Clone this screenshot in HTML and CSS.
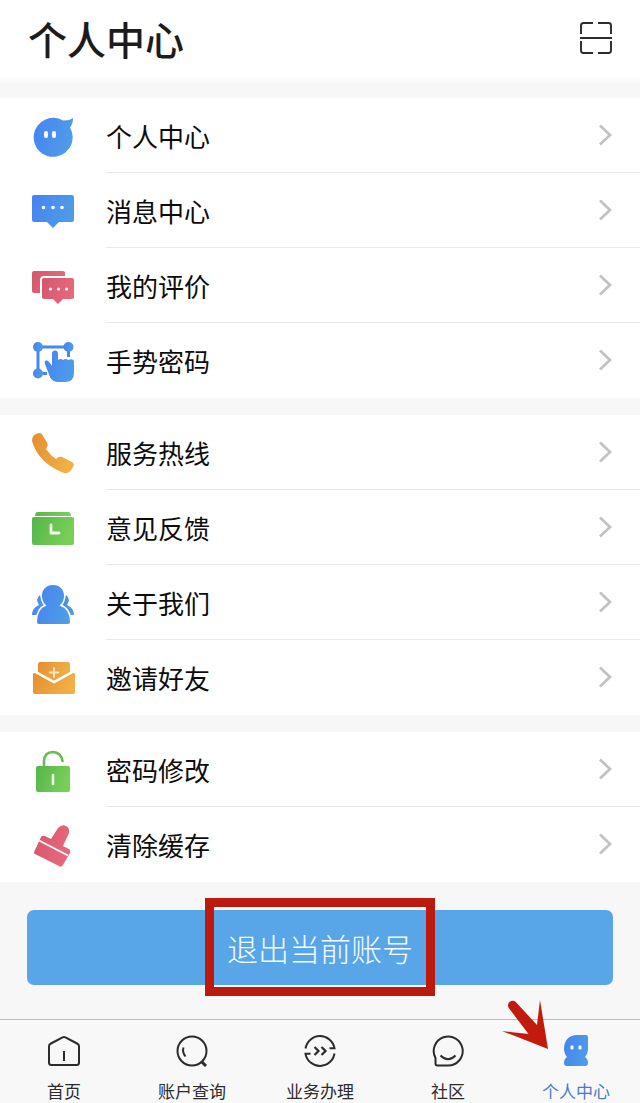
FILE: index.html
```html
<!DOCTYPE html>
<html lang="zh-CN">
	<head>
		<title>个人中心</title>
		<meta charset="UTF-8">
		<meta name="viewport" content="width=device-width, initial-scale=1">
		<link rel="stylesheet" href="styles.css">
	</head>
	<body>
		<!-- общие градиенты иконок -->
		<svg class="defs" width="0" height="0" aria-hidden="true">
			<defs>
				<linearGradient id="blue" x1="0" y1="0" x2="1" y2="0.3"><stop offset="0" stop-color="#4583f0"/><stop offset="1" stop-color="#4e9be8"/></linearGradient>
				<linearGradient id="red" x1="0" y1="0" x2="1" y2="0.3"><stop offset="0" stop-color="#d4566b"/><stop offset="1" stop-color="#e5697c"/></linearGradient>
				<linearGradient id="orange" x1="0" y1="0" x2="1" y2="0.3"><stop offset="0" stop-color="#e58e31"/><stop offset="1" stop-color="#f0b045"/></linearGradient>
				<linearGradient id="green" x1="0" y1="0" x2="1" y2="0.3"><stop offset="0" stop-color="#55b548"/><stop offset="1" stop-color="#78cf58"/></linearGradient>
				<symbol id="arrow" viewBox="0 0 14 24"><path d="M2 2.500L12 12L2 21.500" fill="none" stroke="#c2c2c2" stroke-width="2.800"/></symbol>
			</defs>
		</svg>
		<div class="page">
			<header class="header">
				<h1>个人中心</h1>
				<button class="scan" aria-label="扫一扫">
					<svg viewBox="0 0 32 32" width="32" height="32"><path d="M1 12V3.500Q1 1 3.500 1H13M18 1H28.500Q31 1 31 3.500V12M31 19V28.500Q31 31 28.500 31H18M13 31H3.500Q1 31 1 28.500V19M0 16H32" fill="none" stroke="#2b2b2b" stroke-width="1.900"/></svg>
				</button>
			</header>
			<main class="content">
				<div class="group">
					<a class="row" href="#profile">
						<svg class="icon" viewBox="0 0 44 44"><path d="M42 4Q42 10 39 13.500A19.500 19.500 0 1 1 32 6.500Q38 7 42 4Z" fill="url(#blue)"/><rect x="13" y="17" width="4" height="7" rx="2" fill="#fff"/><rect x="21" y="17" width="4" height="7" rx="2" fill="#fff"/></svg>
						<span class="name">个人中心<svg class="arrow"><use href="#arrow"/></svg></span>
					</a>
					<a class="row" href="#messages">
						<svg class="icon" viewBox="0 0 44 44"><path d="M3 6H41Q43 6 43 8V31Q43 33 41 33H28L22 39L16 33H3Q1 33 1 31V8Q1 6 3 6Z" fill="url(#blue)"/><g fill="#fff"><circle cx="12.500" cy="18.500" r="1.800"/><circle cx="22" cy="18.500" r="1.800"/><circle cx="31" cy="18.500" r="1.800"/></g></svg>
						<span class="name">消息中心<svg class="arrow"><use href="#arrow"/></svg></span>
					</a>
					<a class="row" href="#reviews">
						<svg class="icon" viewBox="0 0 44 44"><rect x="1" y="7" width="33" height="22" rx="2" fill="url(#red)"/><path d="M13 14H41Q43 14 43 16V33Q43 35 41 35H32L27 40L22 35H13Q11 35 11 33V16Q11 14 13 14Z" fill="url(#red)" stroke="#fff" stroke-width="4" paint-order="stroke"/><g fill="#fff"><circle cx="19.500" cy="25" r="1.600"/><circle cx="27.500" cy="25" r="1.600"/><circle cx="35.500" cy="25" r="1.600"/></g></svg>
						<span class="name">我的评价<svg class="arrow"><use href="#arrow"/></svg></span>
					</a>
					<a class="row" href="#gesture">
						<svg class="icon" viewBox="0 0 44 44"><path d="M16 34.500H7V8H37.500V18" fill="none" stroke="#4788ed" stroke-width="3"/><g fill="url(#blue)"><circle cx="7" cy="8" r="5"/><circle cx="37.500" cy="8" r="5"/><circle cx="7" cy="34.500" r="5"/><path d="M21 29V15Q21 11.500 24 11.500Q27 11.500 27 15V21Q30 19 32 21Q35 19 37 21Q43 19 43 23V34Q43 43 34 43H28Q21 43 19 38L14 25Q13 21 16 21.500Q18 22 21 27Z" stroke="#fff" stroke-width="2" paint-order="stroke"/></g></svg>
						<span class="name">手势密码<svg class="arrow"><use href="#arrow"/></svg></span>
					</a>
				</div>
				<div class="group">
					<a class="row" href="#hotline">
						<svg class="icon" viewBox="0 0 44 44"><path d="M1 10Q1 3 8 2Q11 2 12 5L16.500 12Q17.500 15 15 18Q19 24 25 28Q28 25 31 26L41 31Q44 33 42 36Q39 43 33 42Q22 38 13 30Q4 21 1 10Z" fill="url(#orange)"/></svg>
						<span class="name">服务热线<svg class="arrow"><use href="#arrow"/></svg></span>
					</a>
					<a class="row" href="#feedback">
						<svg class="icon" viewBox="0 0 44 44"><path d="M4 10Q4 6 7 6H37Q40 6 40 10Z" fill="url(#green)"/><rect x="1" y="11" width="42" height="28" rx="2" fill="url(#green)"/><path d="M20 19V27H28" fill="none" stroke="#f0fbe9" stroke-width="2.800" stroke-linecap="round" stroke-linejoin="round"/></svg>
						<span class="name">意见反馈<svg class="arrow"><use href="#arrow"/></svg></span>
					</a>
					<a class="row" href="#about">
						<svg class="icon" viewBox="0 0 44 44"><g fill="url(#blue)"><path d="M9 14Q4 18 8 24Q1 27 1 34H6L15 25Z"/><path d="M35 14Q40 18 36 24Q43 27 43 34H38L29 25Z"/><path d="M22 4C14 4 10.500 10 11 16C11.500 20 13 23 15.500 24.500Q6 28 6 41Q6 43 8 43H37Q39 43 39 41Q39 28 28.500 24.500C31 23 32.500 20 33 16C33.500 10 30 4 22 4Z" stroke="#fff" stroke-width="3" paint-order="stroke"/></g></svg>
						<span class="name">关于我们<svg class="arrow"><use href="#arrow"/></svg></span>
					</a>
					<a class="row" href="#invite">
						<svg class="icon" viewBox="0 0 44 44"><path d="M7 17V8Q7 6 9 6H37Q39 6 39 8V17L23 25Z" fill="url(#orange)"/><path d="M2 18Q2 17 4 17L23 27.500L42 17Q44 17 44 18V36Q44 38 42 38H4Q2 38 2 36Z" fill="url(#orange)"/><path d="M3 15L23 26L43 15" fill="none" stroke="#fff" stroke-width="2.400"/><path d="M18 16.500H28M23 11.500V21.500" stroke="#ffe6bd" stroke-width="2"/></svg>
						<span class="name">邀请好友<svg class="arrow"><use href="#arrow"/></svg></span>
					</a>
				</div>
				<div class="group">
					<a class="row" href="#password">
						<svg class="icon" viewBox="0 0 44 44"><path d="M13 18V13Q13.500 4 22 4Q30 4.500 31.500 13" fill="none" stroke="#63bf51" stroke-width="2.600" stroke-linecap="round"/><rect x="5" y="18" width="34" height="26" rx="2" fill="url(#green)"/><path d="M22 27V36" stroke="#f0fbe9" stroke-width="2.600" stroke-linecap="round"/></svg>
						<span class="name">密码修改<svg class="arrow"><use href="#arrow"/></svg></span>
					</a>
					<a class="row" href="#cache">
						<svg class="icon" viewBox="0 0 44 44"><path d="M20 16L27 5Q31 1 35 3Q39 5 38 10L32 23L38 26Q40 28 39 30L32 42Q30 45 28 43L4 31Q2 30 4 27L10 14Q11 12 14 13Z" fill="url(#red)"/><path d="M8 17.500L37 32.500" stroke="#fff" stroke-width="1.800"/></svg>
						<span class="name">清除缓存<svg class="arrow"><use href="#arrow"/></svg></span>
					</a>
				</div>
				<div class="logout">
					<button class="logout-btn">退出当前账号</button>
					<div class="mark"></div>
				</div>
			</main>
			<nav class="tabs">
				<a class="tab" href="#home">
					<svg viewBox="0 0 32 32"><path d="M3 8.500L14.500 2.500Q16 1.500 17.500 2.500L29 8.500Q31 9.500 31 11V27.500Q31 30 28.500 30H3.500Q1 30 1 27.500V11Q1 9.500 3 8.500ZM16 16V26"/></svg>
					<span>首页</span>
				</a>
				<a class="tab" href="#accounts">
					<svg viewBox="0 0 32 32"><circle cx="16" cy="16" r="14.500"/><path d="M7.500 12.500Q6 17 9.500 21.500"/><path d="M25.500 26.500L30 31" stroke-width="3"/></svg>
					<span>账户查询</span>
				</a>
				<a class="tab" href="#business">
					<svg viewBox="0 0 32 32"><path d="M1.500 13.500A14.700 14.700 0 0 1 30.500 13.200H25.500M30.500 18.500A14.700 14.700 0 0 1 1.500 18.800H6.500" /><path d="M10.500 12L14.500 16L10.500 20M17.500 12L21.500 16L17.500 20" stroke-width="2.200"/></svg>
					<span>业务办理</span>
				</a>
				<a class="tab" href="#community">
					<svg viewBox="0 0 32 32"><path d="M16 30.500A14.500 14.500 0 1 0 3.500 23V28.500Q3.500 30.500 5.500 30.500ZM8.500 20.500Q16 28 23.500 20.500"/></svg>
					<span>社区</span>
				</a>
				<a class="tab active" href="#me">
					<span class="me">
						<svg viewBox="0 0 32 32"><path d="M16 0H26Q28 0 28 2V13Q28 19 25 22Q28 24 28 28Q28 31 25 31H7Q4 31 4 28Q4 24 7 22Q4 19 4 13Q5 1 16 0Z" fill="url(#blue)" stroke="none"/><g fill="#fff" stroke="none"><rect x="10.500" y="10.500" width="3" height="4" rx="1.200"/><rect x="18.500" y="10.500" width="3" height="4" rx="1.200"/></g></svg>
						<svg class="pointer" viewBox="0 0 50 52"><path d="M8.800 9A4.600 4.600 0 0 1 16.500 3.800L37 26L40 1L48 50L2 32L28.500 35Z" fill="#c11b0e" stroke="none"/></svg>
					</span>
					<span>个人中心</span>
				</a>
			</nav>
		</div>
	</body>
</html>
```
FILE: styles.css
```css
/* common */
* {
	box-sizing: border-box; margin: 0; padding: 0;
}
body {
	background-color: #f7f7f8; color: #0c0c0c; font-family: "Noto Sans CJK SC", "Noto Sans", sans-serif;
}
a {
	color: inherit; text-decoration: none;
}
button {
	border: none; background: none; font-family: inherit; cursor: pointer;
}
svg {
	display: block;
}
.defs {
	position: absolute;
}
.page {
	min-height: 100vh; display: flex; flex-direction: column;
}
/* header */
.header {
	display: flex; align-items: center; justify-content: space-between; height: 76px; padding: 0 28px; background-color: #fff;
}
.header h1 {
	font-size: 39px; font-weight: 500; line-height: 60px; color: #1c1c1c;
}
/* list */
.content {
	flex: 1; padding-top: 22px; background: linear-gradient(#fff, #f7f7f8 8px);
}
.group {
	margin-bottom: 17px; background-color: #fff;
}
.row {
	display: flex; align-items: center; gap: 31px; height: 75px; padding-left: 31px;
}
.icon {
	width: 44px; height: 44px; flex: none;
}
.name {
	display: flex; flex: 1; align-items: center; justify-content: space-between; height: 75px; padding-right: 28px; border-bottom: 1px solid #e8e8e9; font-size: 26px;
}
.row:last-child .name {
	border-bottom-color: transparent;
}
.arrow {
	width: 14px; height: 24px;
}
/* logout */
.logout {
	position: relative; margin: 28px 27px 34px;
}
.logout-btn {
	display: block; width: 100%; height: 75px; border-radius: 7px; background-color: #58a5e8; color: #f3fbff; font-size: 31px; font-weight: 300;
}
.mark {
	position: absolute; inset: -12px 0 -11px; width: 230px; margin: 0 auto; border: 9px solid #bd1a0f; pointer-events: none;
}
/* bottom tabs */
.tabs {
	display: flex; border-top: 1px solid #bcbcbd; background-color: #f8f8f9;
}
.tab {
	display: flex; flex: 1; flex-direction: column; align-items: center; gap: 12px; padding-top: 15px; font-size: 17px; line-height: 24px; color: #2b2b2b;
}
.tab svg {
	width: 32px; height: 32px; fill: none; stroke: #2b2b2b; stroke-width: 2;
}
.tab.active {
	color: #4a7cc0;
}
.me {
	position: relative;
}
.tab .pointer {
	position: absolute; right: 42px; top: -36px; width: 50px; height: 52px;
}
```
